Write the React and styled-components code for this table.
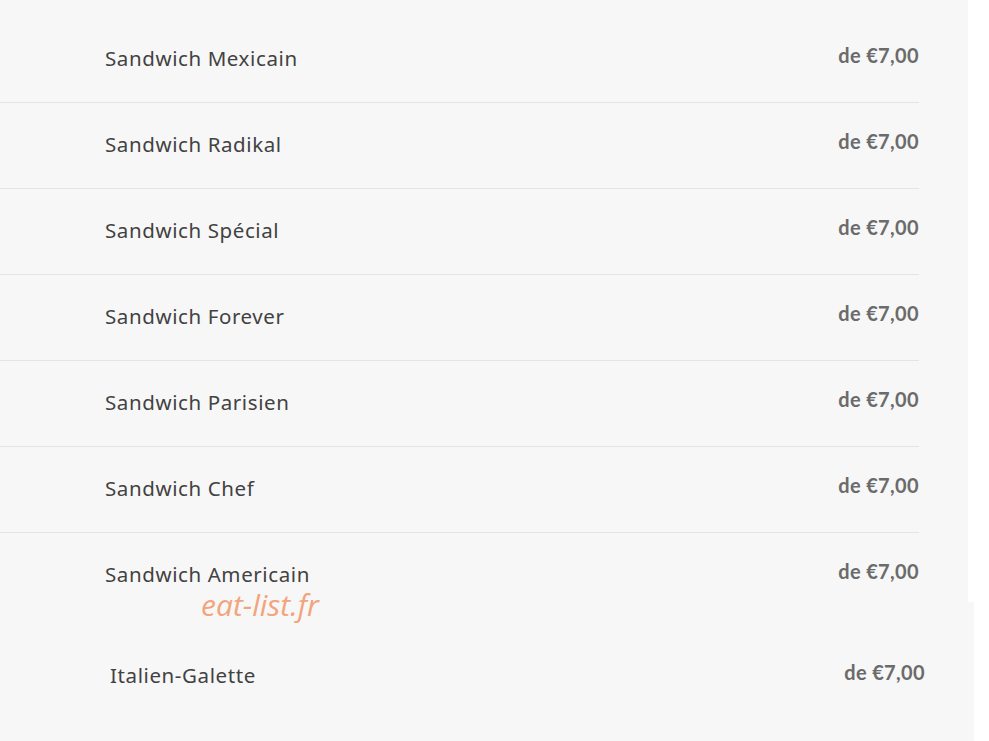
import React from "react";
import styled, { createGlobalStyle } from "styled-components";

const Global = createGlobalStyle`
  html, body { margin: 0; padding: 0; background: #ffffff; }
  body { font-family: "Noto Sans", sans-serif; }
`;

const Page = styled.div`
  position: relative;
  width: 989px;
  height: 741px;
  overflow: hidden;
  background: #ffffff;
  display: flex;
  flex-direction: column;
`;

const Panel = styled.section`
  width: ${(p) => p.$width}px;
  height: ${(p) => p.$height}px;
  background: #f7f7f7;
  overflow: hidden;
  padding-top: ${(p) => p.$top}px;
  box-sizing: border-box;
  flex: none;
`;

const Row = styled.div`
  height: 86px;
  box-sizing: border-box;
  margin-right: 49px;
  padding-left: ${(p) => p.$indent}px;
  display: flex;
  align-items: center;
  justify-content: space-between;
  border-bottom: 1px solid ${(p) => (p.$line ? "#e4e4e4" : "transparent")};
`;

const Name = styled.span`
  font-family: "Noto Sans", sans-serif;
  font-size: 20.5px;
  color: #424242;
  letter-spacing: 0.6px;
  margin-bottom: 3px;
`;

const Price = styled.span`
  font-family: Lato, sans-serif;
  font-weight: 700;
  font-size: 20px;
  color: #6b6b6b;
  margin-bottom: 10px;
  letter-spacing: 0.35px;
`;

const Watermark = styled.div`
  position: absolute;
  left: 201px;
  top: 590px;
  font-family: "Open Sans", sans-serif;
  font-style: italic;
  font-size: 30px;
  color: #f2a47c;
  line-height: 1;
`;

const items = [
  "Sandwich Mexicain",
  "Sandwich Radikal",
  "Sandwich Spécial",
  "Sandwich Forever",
  "Sandwich Parisien",
  "Sandwich Chef",
  "Sandwich Americain",
];

export default function App() {
  return (
    <>
      <Global />
      <Page>
        <Panel $width={968} $height={602} $top={17}>
          {items.map((n, i) => (
            <Row key={n} $indent={105} $line={i < items.length - 1}>
              <Name>{n}</Name>
              <Price>de €7,00</Price>
            </Row>
          ))}
        </Panel>
        <Panel $width={974} $height={139} $top={32}>
          <Row $indent={110}>
            <Name>Italien-Galette</Name>
            <Price>de €7,00</Price>
          </Row>
        </Panel>
        <Watermark>eat-list.fr</Watermark>
      </Page>
    </>
  );
}
